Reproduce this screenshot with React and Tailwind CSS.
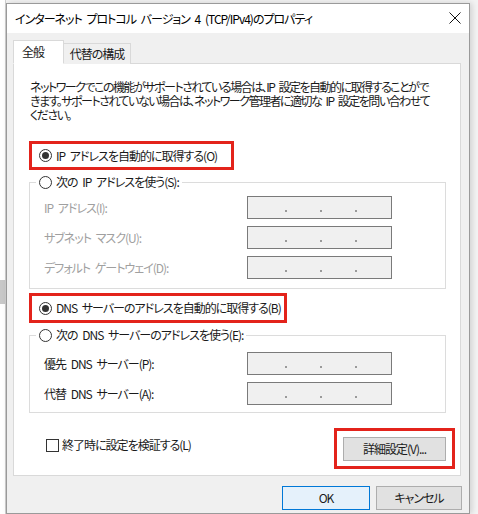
import React from 'react';

const jp = "font-['Noto_Sans_CJK_JP','Noto_Sans',sans-serif] [font-feature-settings:'palt']";

const Radio = ({ checked }) => (
  <span className="w-[13px] h-[13px] rounded-full border border-[#333333] bg-white flex items-center justify-center shrink-0">
    {checked && <span className="w-[7px] h-[7px] rounded-full bg-[#333333]" />}
  </span>
);

const IpBox = () => (
  <div className="w-[145px] h-[23px] border border-[#7a7a7a] bg-[#f0f0f0] flex gap-[33px] pl-[37px] pt-[13px] shrink-0">
    {[0, 1, 2].map((i) => (
      <span key={i} className="w-[2px] h-[2px] bg-[#9a9a9a]" />
    ))}
  </div>
);

const Field = ({ label, disabled }) => (
  <div className="flex items-center">
    <span className={`w-[217px] pl-[14px] whitespace-nowrap ${disabled ? 'text-[#a0a0a0]' : 'text-[#1a1a1a]'}`}>{label}</span>
    <IpBox />
  </div>
);

const Button = ({ children, primary, className = '' }) => (
  <div
    className={`h-[24px] flex items-center justify-center border whitespace-nowrap ${
      primary ? 'border-[#0078d7] bg-[#e5f1fb]' : 'border-[#adadad] bg-[#e1e1e1]'
    } ${className}`}
  >
    {children}
  </div>
);

const App = () => {
  return (
    <div className={`w-[478px] h-[514px] overflow-hidden flex bg-[#f3f3f3] text-[12px] tracking-[-1px] [word-spacing:3px] text-[#1a1a1a] ${jp}`}>
      {/* window behind */}
      <div className="w-[6px] shrink-0 bg-white border-r border-[#cfcfcf] flex flex-col">
        <div className="h-[280px]" />
        <div className="h-[24px] bg-[#c8c8c8]" />
      </div>

      {/* dialog */}
      <div className="w-[464px] mt-[3px] shrink-0 border border-[#9a9a9a] flex flex-col bg-[#f0f0f0] shadow-[2px_0_6px_rgba(0,0,0,0.15)]">
        {/* title bar */}
        <div className="h-[29px] bg-white flex items-center justify-between pl-[8px] pr-[8px]">
          <span className="text-[12px] text-black whitespace-nowrap">インターネット プロトコル バージョン 4 (TCP/IPv4)のプロパティ</span>
          <svg width="12" height="12" viewBox="0 0 12 12" className="mb-[2px]">
            <path d="M0.5 0.5 L11.5 11.5 M11.5 0.5 L0.5 11.5" stroke="#111" strokeWidth="1" />
          </svg>
        </div>

        {/* body */}
        <div className="flex flex-col pl-[6px] pr-[8px] pt-[7px]">
          {/* tabs */}
          <div className="flex items-end h-[24px] relative z-10 -mb-[1px]">
            <div className="w-[51px] h-[24px] bg-white border border-[#d9d9d9] border-b-white flex items-start pt-[2px] pl-[8px]">
              全般
            </div>
            <div className="w-[67px] h-[21px] bg-[#f0f0f0] border border-[#d9d9d9] border-l-0 border-b-0 flex items-center justify-center">
              代替の構成
            </div>
          </div>

          {/* panel */}
          <div className="h-[413px] bg-white border border-[#d9d9d9] flex flex-col pl-[16px] pr-[5px] pt-[16px]">
            <p className="leading-[14px] whitespace-nowrap tracking-[-1.5px]">
              ネットワークでこの機能がサポートされている場合は、IP 設定を自動的に取得することがで
              <br />
              きます。サポートされていない場合は、ネットワーク管理者に適切な IP 設定を問い合わせて
              <br />
              ください。
            </p>

            <div className="mt-[19px] w-[205px] h-[29px] -ml-[1px] border-[3px] border-[#e3231b] flex items-center pl-[7px] gap-[4px] whitespace-nowrap">
              <Radio checked />
              <span>IP アドレスを自動的に取得する(O)</span>
            </div>

            <fieldset className="mt-[4px] -ml-[1px] w-[417px] border border-[#dcdcdc] pb-[9px] flex flex-col gap-[8px]">
              <legend className="ml-[6px] px-[3px] flex items-center gap-[4px] leading-[16px] whitespace-nowrap">
                <Radio />
                <span>次の IP アドレスを使う(S):</span>
              </legend>
              <div className="flex flex-col gap-[7px] pt-[6px]">
                <Field label="IP アドレス(I):" disabled />
                <Field label="サブネット マスク(U):" disabled />
                <Field label="デフォルト ゲートウェイ(D):" disabled />
              </div>
            </fieldset>

            <div className="mt-[4px] w-[258px] h-[30px] -ml-[1px] border-[3px] border-[#e3231b] flex items-center pl-[7px] gap-[4px] whitespace-nowrap">
              <Radio checked />
              <span>DNS サーバーのアドレスを自動的に取得する(B)</span>
            </div>

            <fieldset className="mt-[4px] -ml-[1px] w-[417px] border border-[#dcdcdc] pb-[7px]">
              <legend className="ml-[6px] px-[3px] flex items-center gap-[4px] leading-[16px] whitespace-nowrap">
                <Radio />
                <span>次の DNS サーバーのアドレスを使う(E):</span>
              </legend>
              <div className="flex flex-col gap-[7px] pt-[9px]">
                <Field label="優先 DNS サーバー(P):" />
                <Field label="代替 DNS サーバー(A):" />
              </div>
            </fieldset>

            <div className="flex justify-between items-start mt-[15px]">
              <div className="flex items-center gap-[3px] mt-[8px] ml-[16px] whitespace-nowrap">
                <span className="w-[13px] h-[13px] border border-[#333333] bg-white shrink-0" />
                <span>終了時に設定を検証する(L)</span>
              </div>
              <div className="w-[121px] h-[41px] border-[3px] border-[#e3231b] flex items-center justify-center">
                <Button className="w-[103px]">詳細設定(V)...</Button>
              </div>
            </div>
          </div>

          {/* buttons */}
          <div className="flex justify-end gap-[6px] mt-[10px]">
            <Button primary className="w-[88px]">OK</Button>
            <Button className="w-[86px] -mr-[1px]">キャンセル</Button>
          </div>
        </div>
      </div>
    </div>
  );
};

export default App;
